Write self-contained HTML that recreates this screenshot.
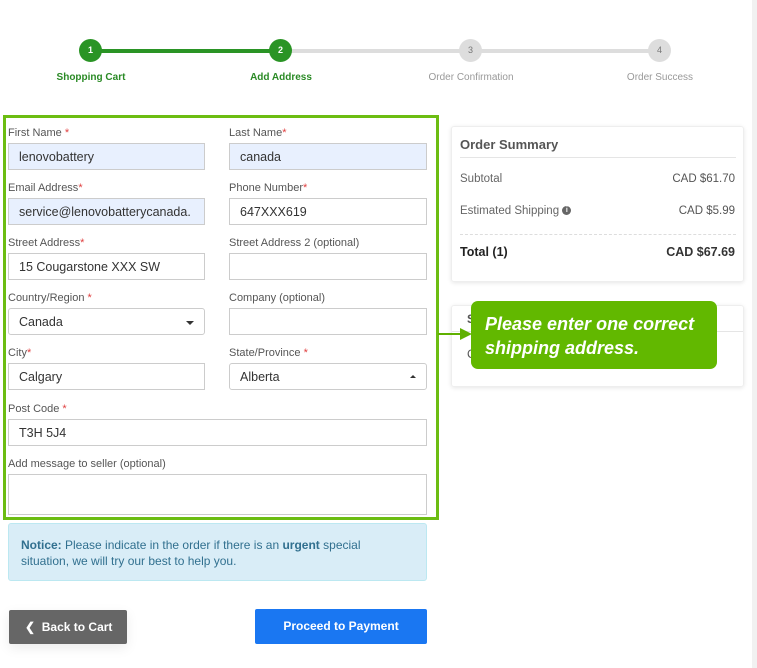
<!DOCTYPE html>
<html><head><meta charset="utf-8"><style>
*{box-sizing:border-box;margin:0;padding:0}
body{width:757px;height:668px;background:#fff;font-family:"Liberation Sans",sans-serif;position:relative;overflow:hidden;color:#333}
.a{position:absolute}
.lbl{position:absolute;font-size:11px;color:#555}
.lbl i{color:#e04040;font-style:normal}
.in{position:absolute;height:27px;border:1px solid #ccc;font-size:12.5px;color:#333;padding:6px 10px;line-height:14px;background:#fff}
.blue{background:#e8f0fe}
.sel{border-radius:3px}
.c{position:absolute;width:23px;height:23px;border-radius:50%;font-size:9px;text-align:center;line-height:23px;font-weight:bold}
.sl{position:absolute;font-size:10px;width:140px;text-align:center}
</style></head><body>
<div class="a" style="left:752px;top:0;width:5px;height:668px;background:#f1f1f1"></div>
<div class="a" style="left:91px;top:49px;width:190px;height:4px;background:#2a9425"></div>
<div class="a" style="left:281px;top:49px;width:380px;height:4px;background:#ddd"></div>
<div class="c" style="left:79px;top:39px;background:#2a9425;color:#fff">1</div>
<div class="c" style="left:269px;top:39px;background:#2a9425;color:#fff">2</div>
<div class="c" style="left:459px;top:39px;background:#ddd;color:#777;font-weight:normal">3</div>
<div class="c" style="left:648px;top:39px;background:#ddd;color:#777;font-weight:normal">4</div>
<div class="sl" style="left:21px;top:72px;color:#2a8a25;font-weight:bold">Shopping Cart</div>
<div class="sl" style="left:211px;top:72px;color:#2a8a25;font-weight:bold">Add Address</div>
<div class="sl" style="left:401px;top:72px;color:#999">Order Confirmation</div>
<div class="sl" style="left:590px;top:72px;color:#999">Order Success</div>
<div class="a" style="left:3px;top:115px;width:436px;height:405px;border:3px solid #6cbd12"></div>
<div class="lbl" style="left:8px;top:127px">First Name <i>*</i></div>
<div class="lbl" style="left:229px;top:127px">Last Name<i>*</i></div>
<div class="in blue" style="left:8px;top:143px;width:197px">lenovobattery</div>
<div class="in blue" style="left:229px;top:143px;width:198px">canada</div>
<div class="lbl" style="left:8px;top:182px">Email Address<i>*</i></div>
<div class="lbl" style="left:229px;top:182px">Phone Number<i>*</i></div>
<div class="in blue" style="left:8px;top:198px;width:197px;overflow:hidden;white-space:nowrap">service@lenovobatterycanada.</div>
<div class="in" style="left:229px;top:198px;width:198px">647XXX619</div>
<div class="lbl" style="left:8px;top:237px">Street Address<i>*</i></div>
<div class="lbl" style="left:229px;top:237px">Street Address 2 (optional)</div>
<div class="in" style="left:8px;top:253px;width:197px">15 Cougarstone XXX SW</div>
<div class="in" style="left:229px;top:253px;width:198px"></div>
<div class="lbl" style="left:8px;top:292px">Country/Region <i>*</i></div>
<div class="lbl" style="left:229px;top:292px">Company (optional)</div>
<div class="in sel" style="left:8px;top:308px;width:197px">Canada<span class="a" style="right:10px;top:12px;border-left:4px solid transparent;border-right:4px solid transparent;border-top:4px solid #333"></span></div>
<div class="in" style="left:229px;top:308px;width:198px"></div>
<div class="lbl" style="left:8px;top:347px">City<i>*</i></div>
<div class="lbl" style="left:229px;top:347px">State/Province <i>*</i></div>
<div class="in" style="left:8px;top:363px;width:197px">Calgary</div>
<div class="in sel" style="left:229px;top:363px;width:198px">Alberta<span class="a" style="right:10px;top:11px;border-left:3px solid transparent;border-right:3px solid transparent;border-bottom:3px solid #333"></span></div>
<div class="lbl" style="left:8px;top:403px">Post Code <i>*</i></div>
<div class="in" style="left:8px;top:419px;width:419px">T3H 5J4</div>
<div class="lbl" style="left:8px;top:458px">Add message to seller (optional)</div>
<div class="in" style="left:8px;top:474px;width:419px;height:41px"></div>
<div class="a" style="left:8px;top:523px;width:419px;height:58px;background:#d9edf7;border:1px solid #bce8f1;border-radius:3px;padding:13px 40px 13px 12px;font-size:12px;line-height:16px;color:#31708f"><b>Notice:</b> Please indicate in the order if there is an <b>urgent</b> special situation, we will try our best to help you.</div>
<div class="a" style="left:9px;top:610px;width:118px;height:34px;background:#666;border-radius:2px;color:#fff;font-size:12px;font-weight:bold;line-height:34px;padding-left:16px;box-shadow:0 4px 12px rgba(0,0,0,.08)">&#10094;&nbsp; Back to Cart</div>
<div class="a" style="left:255px;top:609px;width:172px;height:35px;background:#1a77f2;border-radius:2px;color:#fff;font-size:12px;font-weight:bold;line-height:35px;text-align:center">Proceed to Payment</div>
<div class="a" style="left:451px;top:126px;width:293px;height:156px;border:1px solid #eee;border-radius:3px;box-shadow:0 1px 4px rgba(0,0,0,.1)">
 <div class="a" style="left:8px;top:10px;font-size:13px;font-weight:bold;color:#555">Order Summary</div>
 <div class="a" style="left:8px;top:30px;width:276px;border-top:1px solid #e5e5e5"></div>
 <div class="a" style="left:8px;top:46px;font-size:11.5px;color:#666">Subtotal</div>
 <div class="a" style="right:8px;top:46px;font-size:11.5px;color:#555">CAD $61.70</div>
 <div class="a" style="left:8px;top:78px;font-size:11.5px;color:#666">Estimated Shipping <span style="display:inline-block;width:9px;height:9px;border-radius:50%;background:#666;color:#fff;font-size:7px;line-height:9px;text-align:center;font-weight:bold;vertical-align:middle">i</span></div>
 <div class="a" style="right:8px;top:78px;font-size:11.5px;color:#555">CAD $5.99</div>
 <div class="a" style="left:8px;top:107px;width:276px;border-top:1px dashed #ddd"></div>
 <div class="a" style="left:8px;top:118px;font-size:12.5px;font-weight:bold;color:#222">Total (1)</div>
 <div class="a" style="right:8px;top:118px;font-size:12.5px;font-weight:bold;color:#333">CAD $67.69</div>
</div>
<div class="a" style="left:451px;top:305px;width:293px;height:82px;border:1px solid #eee;border-radius:3px;box-shadow:0 1px 4px rgba(0,0,0,.1)">
 <div class="a" style="left:0;top:25px;width:291px;border-top:1px solid #e5e5e5"></div>
 <div class="a" style="left:15px;top:6px;font-size:12px;font-weight:bold;color:#555">S</div>
 <div class="a" style="left:15px;top:41px;font-size:12px;color:#555">C</div>
</div>
<div class="a" style="left:438px;top:333px;width:24px;height:2px;background:#5fb000"></div>
<div class="a" style="left:460px;top:328px;border-top:6px solid transparent;border-bottom:6px solid transparent;border-left:12px solid #5fb000"></div>
<div class="a" style="left:471px;top:301px;width:246px;height:68px;background:#62b800;border-radius:7px;color:#fff;font-size:18px;font-weight:bold;font-style:italic;line-height:24px;padding:11px 14px">Please enter one correct shipping address.</div>
</body></html>
